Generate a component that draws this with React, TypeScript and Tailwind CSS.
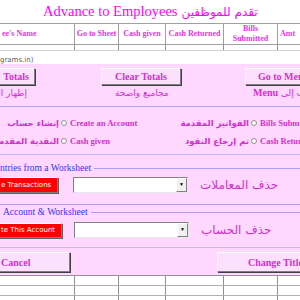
const serif = "font-['Liberation_Serif','Times_New_Roman',serif]";
const arabic = "font-['DejaVu_Sans',sans-serif]";

const cols = [75, 44, 47, 58, 54, 40];
const headers = ["ee's Name", "Go to Sheet", "Cash given", "Cash Returned", "Bills Submitted", "Amt"];

const raised = "border border-t-white border-l-white border-r-[#808080] border-b-[#808080]";

const FormButton = ({ label, className }: { label: string; className: string }) => (
  <div
    className={`shrink-0 flex items-center bg-[#fde0fd] ${raised} shadow-[1px_1px_0_#404040] text-[10px] font-bold text-[#cc33cc] whitespace-nowrap ${serif} ${className}`}
  >
    {label}
  </div>
);

const RedButton = ({ label, className }: { label: string; className: string }) => (
  <div
    className={`shrink-0 flex items-center overflow-hidden bg-[#ff0000] ${raised} shadow-[1px_1px_0_#606060] text-white text-[7px] whitespace-nowrap ${arabic} ${className}`}
  >
    {label}
  </div>
);

const Combo = () => (
  <div className="shrink-0 h-[16px] w-[115px] bg-white border border-t-[#808080] border-l-[#808080] border-r-[#e8e8e8] border-b-[#e8e8e8] flex justify-end">
    <div className="w-[11px] h-full bg-[#f0f0f0] border border-t-white border-l-white border-r-[#808080] border-b-[#808080] flex items-center justify-center text-[5px] text-black">▼</div>
  </div>
);

const Radio = ({ ar, en }: { ar: string; en: string }) => (
  <div className="flex items-center h-[12px] leading-[12px]">
    <span dir="rtl" className={`shrink-0 w-[59px] text-right text-[8.5px] font-bold text-[#cc33cc] whitespace-nowrap ${arabic}`}>{ar}</span>
    <span className="shrink-0 ml-[2px] w-[6px] h-[6px] rounded-full bg-white border border-[#909090]" />
    <span className={`shrink-0 ml-[3px] text-[8.5px] font-bold text-[#cc33cc] whitespace-nowrap ${serif}`}>{en}</span>
  </div>
);

const FrameTitle = ({ label, className }: { label: string; className?: string }) => (
  <div className="flex items-center gap-[3px] h-[12px] leading-[12px]">
    <span className={`text-[9.5px] text-[#3333ff] whitespace-nowrap ${serif} ${className ?? ""}`}>{label}</span>
    <span className="flex-1 border-t border-[#a8a0f0]" />
  </div>
);

const GridRow = ({ h, line }: { h: string; line: string }) => (
  <div className={`flex ${h} border-b ${line}`}>
    {cols.map((w, i) => (
      <div key={i} style={{ width: w }} className="shrink-0 border-r border-[#909090]" />
    ))}
  </div>
);

export default function App() {
  return (
    <div className="w-[300px] h-[300px] overflow-hidden bg-white flex flex-col">
      {/* title */}
      <div className={`h-[23px] shrink-0 pl-[43px] flex items-center gap-[4px] text-[14.5px] text-[#ff00ff] whitespace-nowrap ${serif}`}>
        <span>Advance to Employees</span>
        <span dir="rtl" className={`text-[12px] ${arabic}`}>تقدم للموظفين</span>
      </div>

      {/* header row */}
      <div className="flex shrink-0 h-[22px] border-y border-[#a0a0a0]">
        {headers.map((t, i) => (
          <div
            key={t}
            style={{ width: cols[i] }}
            className={`shrink-0 overflow-hidden border-r border-[#a0a0a0] flex items-center text-center leading-[10px] text-[8px] font-bold text-[#e633e6] whitespace-nowrap ${serif} ${i === 0 || i === 5 ? "justify-start pl-[2px]" : "justify-center"}`}
          >
            {i === 4 ? (
              <span>Bills<br />Submitted</span>
            ) : (
              t
            )}
          </div>
        ))}
      </div>
      <GridRow h="h-[6px] shrink-0" line="border-[#d0d0d0]" />
      <div className="h-[13px] shrink-0 flex items-end text-[7px] text-[#606060] leading-[8px] font-['DejaVu_Sans',sans-serif]">grams.in)</div>

      {/* form */}
      <div className="h-[211px] shrink-0 bg-[#ffd7ff] flex flex-col pt-[4px]">
        <div className="flex">
          <FormButton label="Totals" className="h-[17px] ml-[-40px] w-[75px] justify-end pr-[5px]" />
          <FormButton label="Clear Totals" className="h-[17px] ml-[66px] w-[80px] justify-center" />
          <FormButton label="Go to Menu" className="h-[17px] ml-[64px] w-[80px] pl-[12px]" />
        </div>

        <div className="flex items-center h-[14px] mt-[1px] text-[9px] leading-[14px] text-[#cc33cc] whitespace-nowrap">
          <span dir="rtl" className={`shrink-0 w-[27px] overflow-hidden ${arabic}`}>إظهار المجاميع</span>
          <span dir="rtl" className={`shrink-0 ml-[88px] w-[138px] text-left ${arabic}`}>مجاميع واضحة</span>
          <span className={`shrink-0 font-bold ${serif} text-[10px]`}>Menu</span>
          <span dir="rtl" className={`shrink-0 ml-[3px] ${arabic}`}>الذهاب إلى</span>
        </div>

        <div className="mt-[6px] border-t border-[#b4a8f4]" />

        <div className="grid grid-cols-[190px_110px] gap-y-[6px] mt-[10px]">
          <Radio ar="إنشاء حساب" en="Create an Account" />
          <Radio ar="الفواتير المقدمة" en="Bills Submitted" />
          <Radio ar="النقدية المقدمة" en="Cash given" />
          <Radio ar="تم إرجاع النقود" en="Cash Returned" />
        </div>

        <div className="mt-[7px] border-t border-[#c8b8f4]" />

        {/* frame 1 */}
        <div className="mt-[7px]">
          <FrameTitle label="ntries from a Worksheet" />
        </div>
        <div className="flex items-center mt-[2px]">
          <RedButton label="e Transactions" className="h-[16px] ml-[-2px] w-[60px] pl-[2px]" />
          <div className="ml-[15px]"><Combo /></div>
          <span dir="rtl" className={`ml-[12px] text-[12px] text-[#cc33cc] whitespace-nowrap ${arabic}`}>حذف المعاملات</span>
        </div>
        <div className="mt-[10px] border-t border-[#a8a0f0]" />

        {/* frame 2 */}
        <div className="mt-[1px]">
          <FrameTitle label="Account & Worksheet" className="pl-[3px]" />
        </div>
        <div className="flex items-center mt-[4px] h-[16px]">
          <RedButton label="te This Account" className="h-[15px] ml-[-2px] w-[64px] pl-[2px]" />
          <div className="ml-[12px]"><Combo /></div>
          <span dir="rtl" className={`ml-[12px] text-[12px] text-[#cc33cc] whitespace-nowrap ${arabic}`}>حذف الحساب</span>
        </div>

        <div className="mt-[9px] border-t border-[#c8b8f4]" />

        <div className="flex mt-[4px]">
          <FormButton label="Cancel" className="ml-[-10px] w-[80px] h-[20px] pl-[10px]" />
          <FormButton label="Change Title" className="ml-[147px] w-[90px] h-[20px] pl-[30px]" />
        </div>
      </div>

      {/* sheet below */}
      <div className="border-t border-[#909090]">
        <GridRow h="h-[10px]" line="border-[#b0b0b0]" />
        <GridRow h="h-[10px]" line="border-[#b0b0b0]" />
        <GridRow h="h-[10px]" line="border-[#b0b0b0]" />
      </div>
    </div>
  );
}
